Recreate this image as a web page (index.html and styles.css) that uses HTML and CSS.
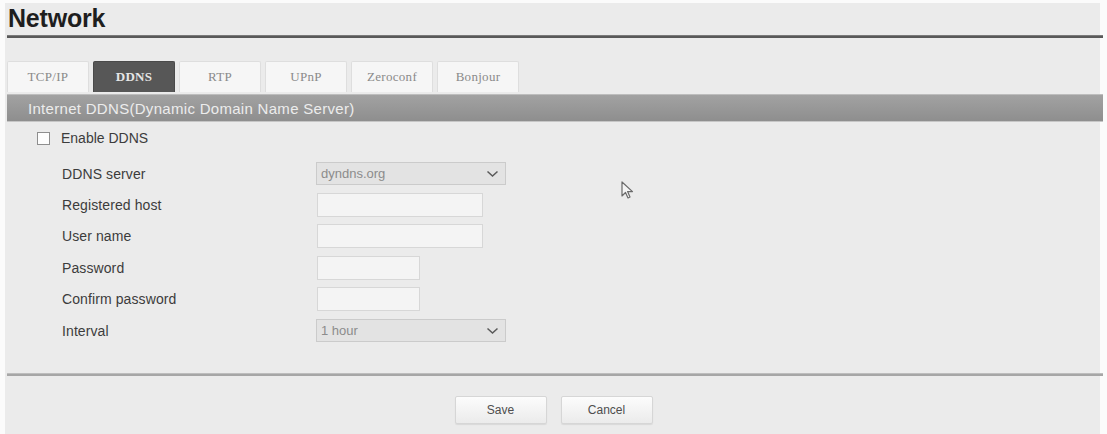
FILE: index.html
```html
<!DOCTYPE html>
<html>
<head>
<meta charset="utf-8">
<title>Network</title>
<link rel="stylesheet" href="styles.css">
</head>
<body>
<div class="page">
  <h1 class="title">Network</h1>
  <div class="rule-dark"></div>

  <div class="tabs">
    <div class="tab">TCP/IP</div>
    <div class="tab active">DDNS</div>
    <div class="tab">RTP</div>
    <div class="tab">UPnP</div>
    <div class="tab">Zeroconf</div>
    <div class="tab">Bonjour</div>
  </div>

  <div class="section-bar">Internet DDNS(Dynamic Domain Name Server)</div>

  <div class="check-row">
    <span class="checkbox"></span>
    <span class="check-label">Enable DDNS</span>
  </div>

  <div class="form">
    <div class="label">DDNS server</div>
    <div class="field">
      <div class="select">
        <span class="select-text">dyndns.org</span>
        <svg class="chev" width="13" height="8" viewBox="0 0 13 8"><polyline points="1.5,1.5 6.5,6 11.5,1.5" fill="none" stroke="#5a5a5a" stroke-width="1.5"/></svg>
      </div>
    </div>

    <div class="label">Registered host</div>
    <div class="field"><input class="text-in wide" type="text"></div>

    <div class="label">User name</div>
    <div class="field"><input class="text-in wide" type="text"></div>

    <div class="label">Password</div>
    <div class="field"><input class="text-in short" type="password"></div>

    <div class="label">Confirm password</div>
    <div class="field"><input class="text-in short" type="password"></div>

    <div class="label">Interval</div>
    <div class="field">
      <div class="select">
        <span class="select-text">1 hour</span>
        <svg class="chev" width="13" height="8" viewBox="0 0 13 8"><polyline points="1.5,1.5 6.5,6 11.5,1.5" fill="none" stroke="#5a5a5a" stroke-width="1.5"/></svg>
      </div>
    </div>
  </div>

  <div class="rule-light"></div>

  <div class="buttons">
    <button class="btn" type="button">Save</button>
    <button class="btn" type="button">Cancel</button>
  </div>
</div>

<svg class="cursor" width="13" height="19" viewBox="0 0 13 19">
  <path d="M1 1 L1 15 L4.5 11.5 L7 17 L9 16 L6.6 10.6 L11.5 10.6 Z" fill="#f4f4f4" stroke="#6a6a6a" stroke-width="1.2" stroke-linejoin="round"/>
</svg>
</body>
</html>
```

FILE: styles.css
```css
* { box-sizing: border-box; }

html, body {
  margin: 0;
  padding: 0;
  background: #fbfbfb;
}

body {
  position: relative;
  width: 1107px;
  height: 434px;
  overflow: hidden;
  font-family: "Liberation Sans", Arial, sans-serif;
}

.page {
  margin: 3px 7px 0 5px;
  padding-left: 2px;
  height: 431px;
  background: #ebebeb;
}

.title {
  margin: 1px 0 0 1px;
  font-size: 25px;
  line-height: 30px;
  font-weight: bold;
  color: #1e1e1e;
  letter-spacing: -0.2px;
}

.rule-dark {
  margin-top: 2px;
  margin-right: -3px;
  height: 3px;
  background: #595959;
  border-top: 1px solid #7a7a7a;
}

.tabs {
  display: flex;
  gap: 4px;
  margin-top: 23px;
  height: 31px;
}

.tab {
  width: 82px;
  height: 31px;
  display: flex;
  align-items: center;
  justify-content: center;
  background: #f6f6f6;
  border: 1px solid #dedede;
  border-bottom: none;
  border-radius: 2px 2px 0 0;
  font-family: "Liberation Serif", "Times New Roman", serif;
  font-size: 13px;
  color: #8a8a8a;
  letter-spacing: 0.3px;
}

.tab.active {
  background: #575757;
  border-color: #4a4a4a;
  color: #e6e6e6;
  font-weight: bold;
}

.section-bar {
  margin-top: 2px;
  margin-right: -3px;
  height: 28px;
  display: flex;
  align-items: center;
  padding-left: 21px;
  background: linear-gradient(#a2a2a2, #8e8e8e);
  border-top: 1px solid #bdbdbd;
  border-bottom: 1px solid #c6c6c6;
  color: #ececec;
  font-size: 15px;
  letter-spacing: 0.3px;
}

.check-row {
  display: flex;
  align-items: center;
  height: 24px;
  margin-top: 4px;
  padding-left: 30px;
}

.checkbox {
  width: 13px;
  height: 13px;
  background: #fdfdfd;
  border: 1px solid #8e8e8e;
}

.check-label {
  margin-left: 11px;
  font-size: 14px;
  color: #3c3c3c;
}

.form {
  display: grid;
  grid-template-columns: 254px 1fr;
  grid-auto-rows: 31.4px;
  margin-top: 8px;
  padding-left: 55px;
}

.label {
  display: flex;
  align-items: center;
  font-size: 14px;
  color: #3c3c3c;
  letter-spacing: 0.1px;
}

.field {
  display: flex;
  align-items: center;
}

.select {
  width: 190px;
  height: 23px;
  display: flex;
  align-items: center;
  justify-content: space-between;
  padding: 0 6px 0 4px;
  background: #e3e3e3;
  border: 1px solid #cbcbcb;
}

.select-text {
  font-size: 13px;
  color: #8c8c8c;
}

.chev { display: block; }

.text-in {
  appearance: none;
  margin: 0 0 0 1px;
  height: 24px;
  padding: 0 4px;
  background: #f4f4f4;
  border: 1px solid #d7d7d7;
  border-radius: 0;
  font-size: 13px;
  outline: none;
}

.text-in.wide { width: 166px; }
.text-in.short { width: 103px; }

.rule-light {
  margin-top: 27px;
  margin-right: -3px;
  height: 3px;
  background: #a6a6a6;
  border-top: 1px solid #bdbdbd;
}

.buttons {
  display: flex;
  justify-content: center;
  gap: 14px;
  margin-top: 20px;
}

.btn {
  width: 92px;
  height: 28px;
  padding: 0;
  background: linear-gradient(#fcfcfc, #ebebeb);
  border: 1px solid #d6d6d6;
  border-radius: 2px;
  box-shadow: 0 1px 1px rgba(0, 0, 0, 0.08);
  font-family: "Liberation Sans", Arial, sans-serif;
  font-size: 12px;
  color: #4e4e4e;
}

.cursor {
  position: absolute;
  left: 621px;
  top: 181px;
}
```
